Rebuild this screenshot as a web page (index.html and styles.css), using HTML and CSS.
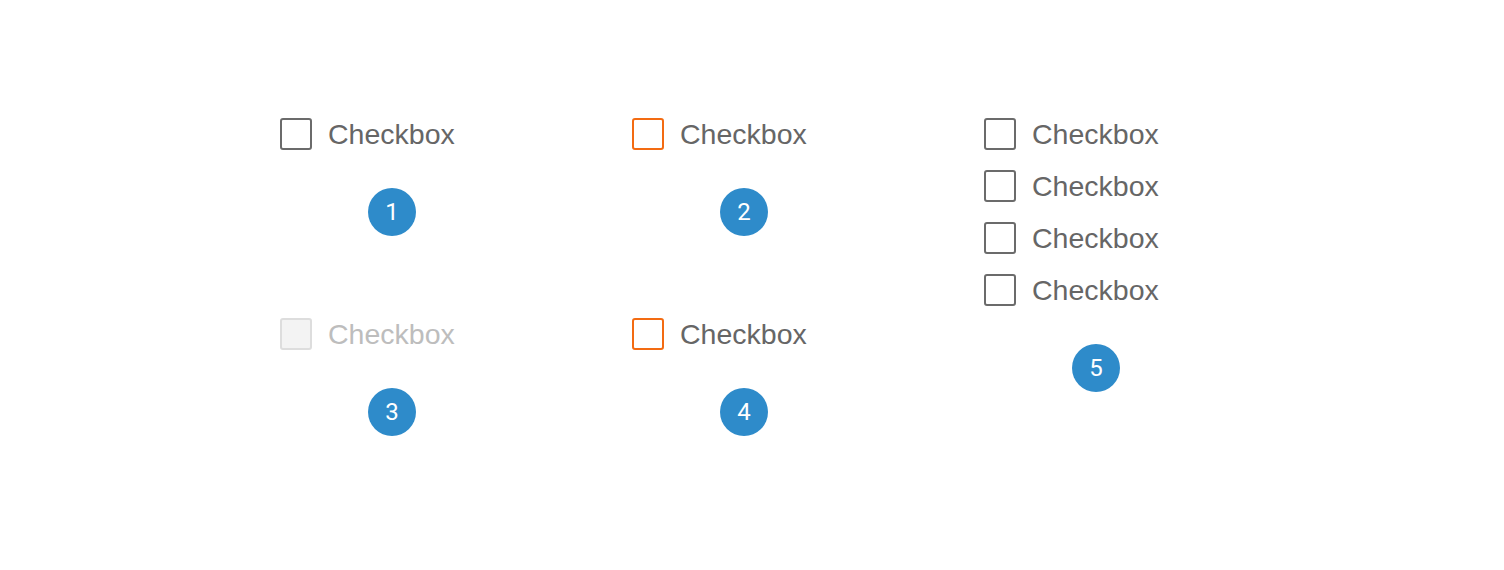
FILE: index.html
```html
<!DOCTYPE html>
<html>
<head>
<meta charset="utf-8">
<link rel="stylesheet" href="styles.css">
</head>
<body>
<div class="page">
  <div class="col">
    <div class="cell">
      <div class="opt"><span class="box"></span><span class="label">Checkbox</span></div>
      <div class="badge">1</div>
    </div>
    <div class="cell">
      <div class="opt disabled"><span class="box"></span><span class="label">Checkbox</span></div>
      <div class="badge">3</div>
    </div>
  </div>
  <div class="col">
    <div class="cell">
      <div class="opt focus"><span class="box"></span><span class="label">Checkbox</span></div>
      <div class="badge">2</div>
    </div>
    <div class="cell">
      <div class="opt focus"><span class="box"></span><span class="label">Checkbox</span></div>
      <div class="badge">4</div>
    </div>
  </div>
  <div class="col">
    <div class="cell">
      <div class="group">
        <div class="opt"><span class="box"></span><span class="label">Checkbox</span></div>
        <div class="opt"><span class="box"></span><span class="label">Checkbox</span></div>
        <div class="opt"><span class="box"></span><span class="label">Checkbox</span></div>
        <div class="opt"><span class="box"></span><span class="label">Checkbox</span></div>
      </div>
      <div class="badge">5</div>
    </div>
  </div>
</div>
</body>
</html>
```

FILE: styles.css
```css
html, body {
  margin: 0;
  padding: 0;
  background: #ffffff;
}
.page {
  display: flex;
  align-items: flex-start;
  gap: 128px;
  padding: 118px 0 0 280px;
  font-family: "Liberation Sans", Arial, sans-serif;
}
.col {
  width: 224px;
  display: flex;
  flex-direction: column;
  gap: 82px;
}
.cell {
  display: flex;
  flex-direction: column;
  gap: 38px;
}
.group {
  display: flex;
  flex-direction: column;
  gap: 20px;
}
.opt {
  display: flex;
  align-items: flex-start;
  height: 32px;
}
.box {
  box-sizing: border-box;
  width: 32px;
  height: 32px;
  border: 2px solid #6b6b6b;
  border-radius: 3px;
  background: #fff;
  flex: none;
}
.label {
  margin-left: 16px;
  margin-top: 0;
  font-size: 28.5px;
  color: #666666;
  line-height: 32px;
}
.focus .box {
  border-color: #f36b12;
}
.disabled .box {
  border-color: #dddddd;
  background: #f3f3f3;
}
.disabled .label {
  color: #bdbdbd;
}
.badge {
  align-self: center;
  width: 48px;
  height: 48px;
  border-radius: 50%;
  background: #2e8bca;
  color: #fff;
  font-family: Roboto, "Liberation Sans", sans-serif;
  font-size: 24px;
  line-height: 48px;
  text-align: center;
}
```
